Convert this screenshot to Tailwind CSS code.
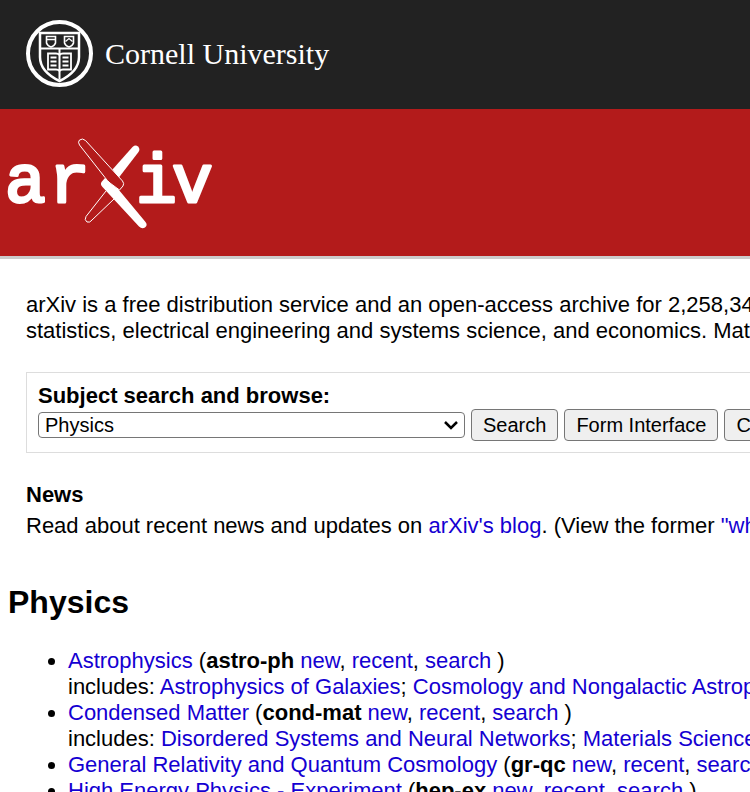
<!DOCTYPE html>
<html lang="en">
<head>
    <meta charset="UTF-8">
    <meta name="viewport" content="width=device-width, initial-scale=1.0">
    <title>arXiv.org e-Print archive</title>
    <script src="https://cdn.jsdelivr.net/npm/@tailwindcss/browser@4"></script>
</head>
<body class="h-screen overflow-hidden bg-white font-['Liberation_Sans',Arial,sans-serif] text-[22px] leading-[26px] text-black whitespace-nowrap">
    <!-- University banner -->
    <header>
        <div class="bg-[#222] px-[26px] pt-5 pb-[22px]">
            <a href="#" class="flex items-center gap-3 text-white">
                <svg class="size-[67px] shrink-0" viewBox="0 0 67 67" fill="none" stroke="currentColor" aria-hidden="true">
                    <circle cx="33.500" cy="33.500" r="31.500" stroke-width="4"/>
                    <path d="M14 13h39v24c0 11-7 18-19.500 24C21 55 14 48 14 37z" stroke-width="2.500"/>
                    <path d="M14 28.500h39M33.500 28.500v31" stroke-width="2"/>
                    <path d="M20.500 16.500h9v6.500q-1 3-4.500 4q-3.500-1-4.500-4zM38.500 16.500h9v6.500q-1 3-4.500 4q-3.500-1-4.500-4z" stroke-width="1.600"/>
                    <path d="M20.500 19.500h9M39.500 21.500l3.500-3 3.500 3" stroke-width="1.300"/>
                    <path d="M22 33.500h8q2.500 0 3.500 1.500 1-1.500 3.500-1.500h8v16H37q-2.500 0-3.500 1.500-1-1.500-3.500-1.500h-8z" stroke-width="1.800"/>
                    <path d="M24.500 37.500h6M24.500 41.500h6M24.500 45.500h6M36.500 37.500h6M36.500 41.500h6M36.500 45.500h6" stroke-width="1.800"/>
                </svg>
                <span class="font-['Palatino_Linotype',Palatino,'Liberation_Serif',serif] text-[30px] leading-9">Cornell University</span>
            </a>
        </div>

        <!-- arXiv banner -->
        <div class="border-b-[3px] border-[#ccc] bg-[#b31b1b] px-2 pt-7 pb-6">
            <a href="#" aria-label="arXiv" class="block">
                <svg class="h-[95px] w-[204px] overflow-visible" viewBox="0 0 204 95" fill="none">
                    <g class="font-['Liberation_Mono',monospace] text-[68px]" fill="#fff" stroke="#fff" stroke-width="3" stroke-linejoin="round">
                        <text x="-3" y="65">a</text>
                        <text x="41" y="65">r</text>
                        <text x="128" y="65">i</text>
                        <text x="164" y="65">v</text>
                    </g>
                    <path d="M104.500 32.500L124.500 10Q127.500 7.500 130 9.500Q132.500 12 130.500 15L110.500 41z" fill="#fff"/>
                    <path d="M98 54L78 79.500Q76 83 79 85Q82 86 84 83L106 62" fill="#b31b1b" stroke="#fff"/>
                    <path d="M97 41L93.500 45Q92 47.500 94.500 50L131 89.500Q134 92.500 137 90.500Q140 88 137.500 85L110.500 52.500z" fill="#fff"/>
                    <path d="M71.500 8Q69.500 5 71.500 3Q74.500 .8 77.500 3.500L114.500 44Q116.500 46.500 115 49L111.500 53L102 46Q99 43.500 97 40.500z" fill="#b31b1b" stroke="#fff" stroke-linejoin="round"/>
                </svg>
            </a>
        </div>
    </header>

    <main class="pt-[33px]">
        <!-- Intro -->
        <p class="px-[26px]">
            arXiv is a free distribution service and an open-access archive for 2,258,348<br>
            statistics, electrical engineering and systems science, and economics. Mate
        </p>

        <!-- Subject search -->
        <form class="mt-7 ml-[26px] border border-r-0 border-[#ddd] px-[11px] pt-[10px] pb-[11px]">
            <label for="subject" class="block font-bold">Subject search and browse:</label>
            <div class="flex items-center gap-[6px]">
                <div class="relative shrink-0">
                    <select id="subject" class="block h-[26px] w-[427px] appearance-none rounded border border-[#767676] bg-white px-[6px] text-[20px] leading-6">
                        <option>Physics</option>
                        <option>Mathematics</option>
                        <option>Computer Science</option>
                    </select>
                    <svg class="pointer-events-none absolute top-2 right-[6px] h-[10px] w-4" viewBox="0 0 16 10" fill="none" stroke="#000" stroke-width="2.500" aria-hidden="true">
                        <path d="M2 2l6 6 6-6"/>
                    </svg>
                </div>
                <button type="button" class="h-8 shrink-0 rounded border border-[#767676] bg-[#efefef] px-[11px] text-[20px]">Search</button>
                <button type="button" class="h-8 shrink-0 rounded border border-[#767676] bg-[#efefef] px-[11px] text-[20px]">Form Interface</button>
                <button type="button" class="h-8 shrink-0 rounded border border-[#767676] bg-[#efefef] px-[11px] text-[20px]">Catchup</button>
            </div>
        </form>

        <!-- News -->
        <section class="mt-[29px] px-[26px]">
            <h2 class="font-bold">News</h2>
            <p class="mt-[5px]">Read about recent news and updates on <a href="#" class="text-[#1400d2]">arXiv's blog</a>. (View the former <a href="#" class="text-[#1400d2]">"what's</a></p>
        </section>

        <!-- Archives -->
        <section class="mt-[43px] px-2">
            <h2 class="text-[32px] leading-10 font-bold">Physics</h2>
            <ul class="mt-[26px] list-disc pl-[60px] [&_a]:text-[#1400d2]">
                <li>
                    <a href="#">Astrophysics</a> (<b>astro-ph</b> <a href="#">new</a>, <a href="#">recent</a>, <a href="#">search</a> )<br>
                    includes: <a href="#">Astrophysics of Galaxies</a>; <a href="#">Cosmology and Nongalactic Astroph</a>
                </li>
                <li>
                    <a href="#">Condensed Matter</a> (<b>cond-mat</b> <a href="#">new</a>, <a href="#">recent</a>, <a href="#">search</a> )<br>
                    includes: <a href="#">Disordered Systems and Neural Networks</a>; <a href="#">Materials Science</a>;
                </li>
                <li><a href="#">General Relativity and Quantum Cosmology</a> (<b>gr-qc</b> <a href="#">new</a>, <a href="#">recent</a>, <a href="#">search</a></li>
                <li><a href="#">High Energy Physics - Experiment</a> (<b>hep-ex</b> <a href="#">new</a>, <a href="#">recent</a>, <a href="#">search</a> )</li>
            </ul>
        </section>
    </main>
</body>
</html>
